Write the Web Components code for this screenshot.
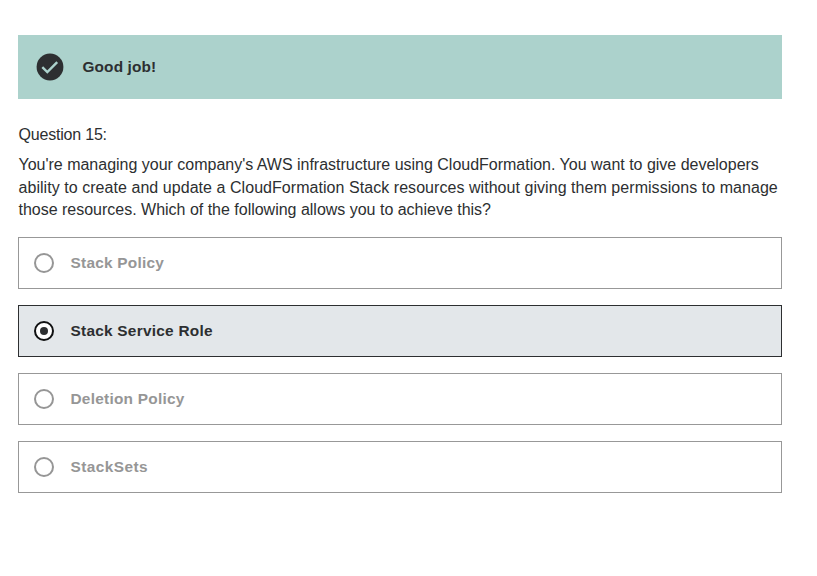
<!DOCTYPE html>
<html lang="en"><head><meta charset="utf-8"><title>Quiz</title>
<style>body{margin:0;background:#fff;color:#2d2f31;font-family:"Liberation Sans",sans-serif}</style></head><body>
<quiz-page></quiz-page>
<script>
const define=(name,html)=>customElements.define(name,class extends HTMLElement{
  constructor(){super();this.attachShadow({mode:'open'}).innerHTML=html;}
});
define('result-banner',`<style>
:host{display:flex;align-items:center;height:64px;padding-left:18px;gap:18.5px;background:#acd2cc;box-sizing:border-box}
svg{display:block;width:28px;height:28px;flex:none}
b{font-size:15.4px;line-height:22px;font-weight:700;white-space:nowrap;letter-spacing:.12px}
</style><svg viewBox="0 0 28 28"><circle cx="14" cy="14" r="13.4" fill="#2d2f31"/><path d="M6.3 14.2 11.3 19 21.2 9.1" fill="none" stroke="#acd2cc" stroke-width="2.4"/></svg><b><slot></slot></b>`);
define('quiz-question',`<style>
:host{display:block;padding:25px 0 0 .5px;font-size:16px;line-height:22.4px}
.line{display:block;width:max-content;white-space:nowrap;letter-spacing:-.2px}
.title{margin-bottom:7.8px}
</style><div class="line title"><slot name="title"></slot></div><slot></slot>`);
define('question-line',`<style>:host{display:block;width:max-content;white-space:nowrap}</style><slot></slot>`);
define('answer-option',`<style>
:host{display:flex;align-items:center;height:52px;box-sizing:border-box;border:1px solid #989898;color:#969696;padding-left:15px;gap:16.5px;letter-spacing:.25px}
:host([selected]){background:#e3e7ea;border-color:#2d2f31;color:#2d2f31}
svg{display:block;width:20px;height:20px;flex:none}
.dot{display:none}:host([selected]) .dot{display:block}
:host([selected]) .ring{stroke:#101112}
b{font-size:15.4px;line-height:22px;font-weight:700;white-space:nowrap}
</style><svg viewBox="0 0 20 20"><circle class="ring" cx="10" cy="10" r="9" fill="#fff" stroke="currentColor" stroke-width="2"/><circle class="dot" cx="10" cy="10" r="4" fill="currentColor"/></svg><b><slot></slot></b>`);
define('quiz-page',`<style>
:host{display:block;padding:35px 35px 0 18px}
.options{display:grid;gap:16px;margin-top:15.8px}
.first{letter-spacing:-.01px}.second{letter-spacing:.05px}.third{letter-spacing:-.01px}
.short{letter-spacing:.45px}
</style>
<result-banner>Good job!</result-banner>
<quiz-question><span slot="title">Question 15:</span>
<question-line class="first">You're managing your company's AWS infrastructure using CloudFormation. You want to give developers</question-line>
<question-line class="second">ability to create and update a CloudFormation Stack resources without giving them permissions to manage</question-line>
<question-line class="third">those resources. Which of the following allows you to achieve this?</question-line></quiz-question>
<div class="options"><answer-option>Stack Policy</answer-option><answer-option selected>Stack Service Role</answer-option><answer-option>Deletion Policy</answer-option><answer-option class="short">StackSets</answer-option></div>`);
</script></body></html>
